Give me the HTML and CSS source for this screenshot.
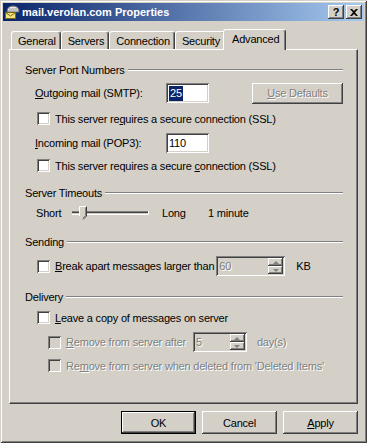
FILE: index.html
```html
<!DOCTYPE html>
<html lang="en">
<head>
    <meta charset="UTF-8">
    <title>mail.verolan.com Properties</title>
    <link rel="stylesheet" href="styles.css">
</head>
<body>
    <div class="window">
        <div class="titlebar">
            <svg class="app-icon" viewBox="0 0 16 16" width="16" height="16">
                <path d="M3 8 Q3 2 9 2 Q15 2 15 8 Z" fill="#e8e8e8" stroke="#6b6b6b"/>
                <path d="M5 5 H13 M4 7 H14" stroke="#9a9a9a"/>
                <rect x="1.5" y="8.5" width="10" height="6" fill="#f4e37a" stroke="#7a6a10"/>
                <path d="M1.5 8.5 L6.5 12 L11.5 8.5" fill="none" stroke="#7a6a10"/>
            </svg>
            <span class="title">mail.verolan.com Properties</span>
            <div class="caption-buttons">
                <div class="caption-btn help">?</div>
                <div class="caption-btn">
                    <svg viewBox="0 0 8 7" width="8" height="7">
                        <path d="M0 0 L2 0 L4 2 L6 0 L8 0 L5 3.5 L8 7 L6 7 L4 5 L2 7 L0 7 L3 3.5 Z" fill="#000"/>
                    </svg>
                </div>
            </div>
        </div>

        <div class="content">
            <div class="tabs">
                <div class="tab">General</div>
                <div class="tab">Servers</div>
                <div class="tab">Connection</div>
                <div class="tab">Security</div>
                <div class="tab active">Advanced</div>
            </div>

            <div class="panel">
                <div class="group-title"><span>Server Port Numbers</span></div>

                <div class="field-row">
                    <span class="field-label"><u>O</u>utgoing mail (SMTP):</span>
                    <div class="textbox"><span class="selected">25</span></div>
                    <div class="btn disabled defaults"><span><u>U</u>se Defaults</span></div>
                </div>
                <div class="check-row">
                    <span class="check"></span>
                    <span>This server re<u>q</u>uires a secure connection (SSL)</span>
                </div>
                <div class="field-row">
                    <span class="field-label"><u>I</u>ncoming mail (POP3):</span>
                    <div class="textbox">110</div>
                </div>
                <div class="check-row tight">
                    <span class="check"></span>
                    <span>This server requires a secure <u>c</u>onnection (SSL)</span>
                </div>

                <div class="group-title spaced"><span>Server Timeouts</span></div>
                <div class="slider-row">
                    <span class="slider-short">Short</span>
                    <svg class="slider" viewBox="0 0 82 20" width="82" height="20">
                        <rect x="2" y="8" width="76" height="1" fill="#808080"/>
                        <rect x="2" y="9" width="76" height="1" fill="#404040"/>
                        <rect x="2" y="11" width="77" height="1" fill="#fff"/>
                        <rect x="78" y="8" width="1" height="4" fill="#fff"/>
                        <path d="M9 3 H17 V13 L13 17 L9 13 Z" fill="#d4d0c8"/>
                        <path d="M9.5 13 V3.5 H16.5" fill="none" stroke="#fff"/>
                        <path d="M16.5 3.5 V13 L13 16.5" fill="none" stroke="#404040"/>
                        <path d="M15.5 4.5 V12.5 L13 15" fill="none" stroke="#808080"/>
                    </svg>
                    <span class="slider-long">Long</span>
                    <span>1 minute</span>
                </div>

                <div class="group-title spaced"><span>Sending</span></div>
                <div class="check-row spin-line">
                    <span class="check"></span>
                    <span><u>B</u>reak apart messages larger than</span>
                    <div class="spin break-spin">
                        <span class="spin-value">60</span>
                        <div class="spin-buttons">
                            <div class="spin-btn"><i class="arrow up"></i></div>
                            <div class="spin-btn"><i class="arrow down"></i></div>
                        </div>
                    </div>
                    <span class="unit">KB</span>
                </div>

                <div class="group-title delivery"><span>Delivery</span></div>
                <div class="check-row first">
                    <span class="check"></span>
                    <span><u>L</u>eave a copy of messages on server</span>
                </div>
                <div class="check-row sub spin-line">
                    <span class="check off"></span>
                    <span class="dim"><u>R</u>emove from server after</span>
                    <div class="spin days-spin">
                        <span class="spin-value">5</span>
                        <div class="spin-buttons">
                            <div class="spin-btn"><i class="arrow up"></i></div>
                            <div class="spin-btn"><i class="arrow down"></i></div>
                        </div>
                    </div>
                    <span class="dim unit">day(s)</span>
                </div>
                <div class="check-row sub last">
                    <span class="check off"></span>
                    <span class="dim">Re<u>m</u>ove from server when deleted from 'Deleted Items'</span>
                </div>
            </div>

            <div class="dialog-buttons">
                <div class="btn default">OK</div>
                <div class="btn">Cancel</div>
                <div class="btn"><span><u>A</u>pply</span></div>
            </div>
        </div>
    </div>
</body>
</html>
```

FILE: styles.css
```css
body {
    margin: 0;
    font-family: "Liberation Sans", Arial, sans-serif;
    font-size: 11px;
    letter-spacing: -0.2px;
    color: #000;
    background-color: #d4d0c8;
}
.window {
    width: 367px;
    height: 443px;
    box-sizing: border-box;
    padding: 3px;
    background-color: #d4d0c8;
    box-shadow: inset 1px 1px #d4d0c8, inset -1px -1px #404040, inset 2px 2px #fff, inset -2px -2px #808080;
}

/* title bar */
.titlebar {
    height: 18px;
    display: flex;
    align-items: center;
    padding: 0 2px 0 1px;
    background: linear-gradient(to right, #0a246a, #a6caf0);
    color: #fff;
}
.app-icon {
    margin-right: 2px;
}
.title {
    flex: 1;
    font-weight: bold;
    letter-spacing: 0;
}
.caption-buttons {
    display: flex;
    gap: 2px;
}
.caption-btn {
    width: 16px;
    height: 14px;
    box-sizing: border-box;
    display: flex;
    align-items: center;
    justify-content: center;
    background-color: #d4d0c8;
    color: #000;
    box-shadow: inset -1px -1px #404040, inset 1px 1px #fff, inset -2px -2px #808080;
}
.caption-btn.help {
    font-weight: bold;
    font-size: 11px;
}

/* tabs */
.content {
    padding: 8px 6px 0;
}
.tabs {
    display: flex;
    align-items: flex-end;
    height: 20px;
    padding-left: 2px;
}
.tab {
    height: 18px;
    box-sizing: border-box;
    display: flex;
    align-items: center;
    padding: 0 4px 0 6px;
    border: 1px solid #fff;
    border-bottom: none;
    border-right-color: #404040;
    border-radius: 3px 3px 0 0;
    box-shadow: inset -1px 0 #808080;
}
.tab.active {
    height: 21px;
    margin: 0 -2px -1px;
    padding: 0 6px 2px 8px;
    position: relative;
    z-index: 1;
    background-color: #d4d0c8;
}

.panel {
    height: 355px;
    box-sizing: border-box;
    border: 1px solid;
    border-color: #fff #404040 #404040 #fff;
    box-shadow: inset -1px -1px #808080;
    padding: 13px 14px 0 15px;
}

/* group boxes */
.group-title {
    display: flex;
    align-items: center;
    height: 14px;
}
.group-title::after {
    content: "";
    flex: 1;
    margin-left: 3px;
    border-top: 1px solid #808080;
    border-bottom: 1px solid #fff;
}
.group-title.spaced {
    margin-top: 12px;
}
.group-title.delivery {
    margin-top: 14px;
}

.field-row {
    display: flex;
    align-items: center;
    height: 20px;
    margin-top: 6px;
    padding-left: 10px;
}
.field-label {
    width: 131px;
}
.textbox {
    width: 43px;
    height: 20px;
    box-sizing: border-box;
    display: flex;
    align-items: center;
    padding-left: 3px;
    background-color: #fff;
    box-shadow: inset 1px 1px #808080, inset -1px -1px #fff, inset 2px 2px #404040, inset -2px -2px #d4d0c8;
}
.selected {
    background-color: #0a246a;
    color: #fff;
    line-height: 15px;
    padding: 0 1px;
}

.check-row {
    display: flex;
    align-items: center;
    height: 17px;
    margin-top: 7px;
    padding-left: 12px;
}
.check-row.tight {
    margin-top: 4px;
}
.check-row.spin-line {
    height: 20px;
}
.check-row.first {
    margin-top: 5px;
}
.check-row.sub {
    padding-left: 23px;
    margin-top: 6px;
}
.check-row.last {
    margin-top: 5px;
}
.check {
    width: 13px;
    height: 13px;
    box-sizing: border-box;
    margin-right: 5px;
    background-color: #fff;
    box-shadow: inset 1px 1px #808080, inset -1px -1px #fff, inset 2px 2px #404040, inset -2px -2px #d4d0c8;
}
.check.off {
    background-color: #d4d0c8;
}
.dim, .btn.disabled span, .spin-value {
    color: #808080;
    text-shadow: 1px 1px #fff;
}

/* slider */
.slider-row {
    display: flex;
    align-items: center;
    height: 20px;
    margin-top: 3px;
    padding-left: 11px;
}
.slider-short {
    width: 34px;
}
.slider-long {
    width: 46px;
    margin-left: 10px;
}

/* spin boxes */
.spin {
    height: 20px;
    box-sizing: border-box;
    display: flex;
    padding: 2px;
    background-color: #d4d0c8;
    box-shadow: inset 1px 1px #808080, inset -1px -1px #fff, inset 2px 2px #404040, inset -2px -2px #d4d0c8;
}
.break-spin {
    width: 69px;
    margin-left: 2px;
}
.days-spin {
    width: 54px;
    margin-left: 7px;
}
.spin-value {
    flex: 1;
    display: flex;
    align-items: center;
    padding-left: 1px;
}
.spin-buttons {
    width: 15px;
    display: flex;
    flex-direction: column;
}
.spin-btn {
    flex: 1;
    display: flex;
    align-items: center;
    justify-content: center;
    box-shadow: inset -1px -1px #404040, inset 1px 1px #fff, inset -2px -2px #808080;
}
.arrow {
    width: 0;
    height: 0;
    border-left: 3px solid transparent;
    border-right: 3px solid transparent;
}
.arrow.up {
    border-bottom: 3px solid #808080;
}
.arrow.down {
    border-top: 3px solid #808080;
}
.unit {
    margin-left: 11px;
}
.days-spin + .unit {
    margin-left: 10px;
}

/* buttons */
.btn {
    width: 75px;
    height: 23px;
    box-sizing: border-box;
    display: flex;
    align-items: center;
    justify-content: center;
    background-color: #d4d0c8;
    box-shadow: inset -1px -1px #404040, inset 1px 1px #fff, inset -2px -2px #808080;
}
.btn.default {
    border: 1px solid #000;
}
.btn.defaults {
    width: 91px;
    height: 21px;
    margin-left: 43px;
}
.dialog-buttons {
    display: flex;
    justify-content: flex-end;
    gap: 6px;
    margin-top: 7px;
}
```
